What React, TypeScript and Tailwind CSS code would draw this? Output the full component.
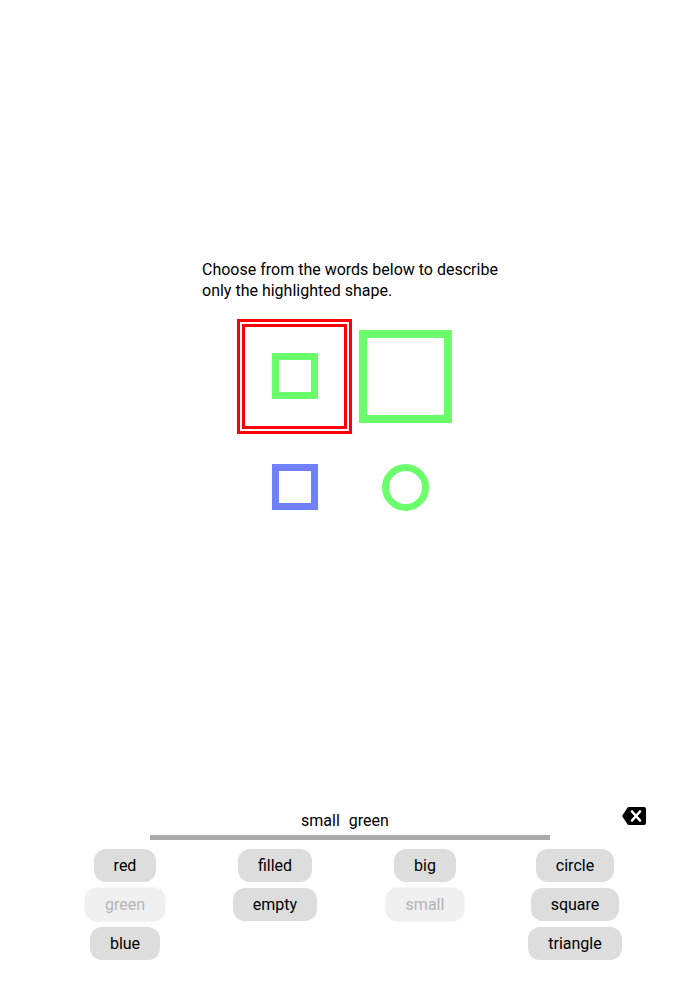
import { useState } from 'react';

type Word = { label: string; used?: boolean };

const COLUMNS: Word[][] = [
  [{ label: 'red' }, { label: 'green', used: true }, { label: 'blue' }],
  [{ label: 'filled' }, { label: 'empty' }],
  [{ label: 'big' }, { label: 'small', used: true }],
  [{ label: 'circle' }, { label: 'square' }, { label: 'triangle' }],
];

function BackspaceIcon() {
  return (
    <svg width="24" height="18" viewBox="0 0 24 18">
      <path d="M6 0 H22 a2 2 0 0 1 2 2 V16 a2 2 0 0 1 -2 2 H6 L0 9 Z" fill="#000" />
      <path d="M10 4.5 L18 13.5 M18 4.5 L10 13.5" stroke="#fff" strokeWidth="2.6" strokeLinecap="round" />
    </svg>
  );
}

function Shape({ kind }: { kind: 'small-green' | 'big-green' | 'blue' | 'circle' }) {
  if (kind === 'big-green')
    return <div className="h-[93px] w-[93px] border-[8px] border-[#6cff6c]" />;
  if (kind === 'blue')
    return <div className="h-[46px] w-[46px] border-[7px] border-[#7080ff]" />;
  if (kind === 'circle')
    return <div className="h-[47px] w-[47px] rounded-full border-[7px] border-[#6cff6c]" />;
  return <div className="h-[46px] w-[46px] border-[7px] border-[#6cff6c]" />;
}

export default function App() {
  const [answer] = useState(['small', 'green']);

  return (
    <div
      className="flex h-[1008px] w-full flex-col bg-white text-black"
      style={{ fontFamily: 'Roboto, "Liberation Sans", sans-serif' }}
    >
      <div className="flex flex-1 flex-col items-center justify-center pb-[6px]">
        <p className="w-[296px] text-[16px] leading-[21px]">
          Choose from the words below to describe only the highlighted shape.
        </p>
        <div className="mt-[20px] grid grid-cols-[111px_111px] grid-rows-[111px_111px]">
          <div className="relative flex items-center justify-center">
            <div className="absolute -inset-[2px] border-[8px] border-double border-[#ff0000]" />
            <Shape kind="small-green" />
          </div>
          <div className="flex items-center justify-center">
            <Shape kind="big-green" />
          </div>
          <div className="flex items-center justify-center">
            <Shape kind="blue" />
          </div>
          <div className="flex items-center justify-center">
            <Shape kind="circle" />
          </div>
        </div>
      </div>

      <div className="flex flex-col items-center pb-[48px]">
        <div className="relative flex w-full justify-center">
          <div className="flex h-[24px] items-end gap-[9px] pr-[10px] text-[16px] leading-[20px]">
            {answer.map((w) => (
              <span key={w}>{w}</span>
            ))}
          </div>
          <div className="absolute right-[54px] top-0">
            <BackspaceIcon />
          </div>
        </div>
        <div className="mt-[4px] h-[5px] w-[400px] bg-[#aaaaaa]" />
        <div className="mt-[9px] grid w-[600px] grid-cols-4">
          {COLUMNS.map((col, i) => (
            <div key={i} className="flex flex-col items-center gap-[6px]">
              {col.map((w) => (
                <button
                  key={w.label}
                  className={
                    w.used
                      ? 'h-[33px] rounded-[12px] bg-[#f0f0f0] px-[20px] text-[16px] text-[#b4b4b4] shadow-[0_0_2px_rgba(0,0,0,0.12)]'
                      : 'h-[33px] rounded-[12px] bg-[#dddddd] px-[20px] text-[16px] text-black'
                  }
                >
                  {w.label}
                </button>
              ))}
            </div>
          ))}
        </div>
      </div>
    </div>
  );
}
